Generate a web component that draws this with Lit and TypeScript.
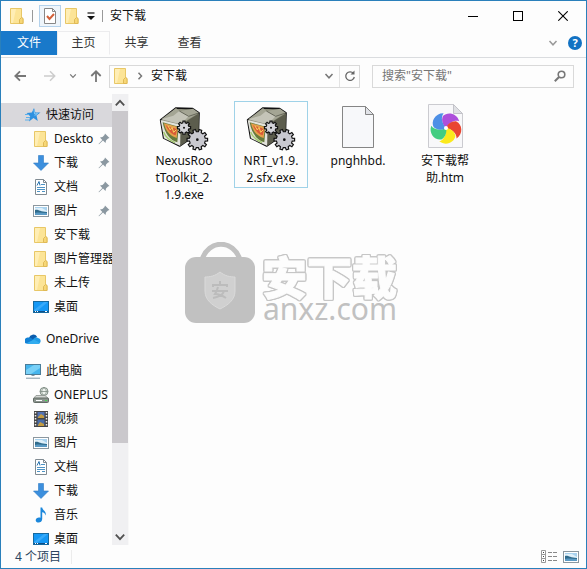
import { LitElement, html, css, svg, nothing } from "lit";
import { customElement, property } from "lit/decorators.js";
import { classMap } from "lit/directives/class-map.js";

const gear = (cx: number, cy: number, outer: number, inner: number, teeth: number) => {
  const pts: string[] = [];
  const step = (Math.PI * 2) / teeth;
  for (let i = 0; i < teeth; i++) {
    const a = i * step;
    for (const [r, o] of [[inner, -0.3], [outer, -0.2], [outer, 0.2], [inner, 0.3]]) {
      pts.push(`${(cx + r * Math.cos(a + o * step)).toFixed(1)} ${(cy + r * Math.sin(a + o * step)).toFixed(1)}`);
    }
  }
  return `M${pts.join("L")}Z`;
};

const petal = "M0 0C-9-7-15-22-9-35C4-49 32-44 39-20C26-25 10-17 0 0Z";

const picture = svg`<rect x=".5" y="2.5" width="15" height="11" fill="#fff" stroke="#8b979f"/>
  <rect x="2" y="4" width="12" height="8" fill="#a9d2ee"/><path d="M2 5h7l5 3v1H2z" fill="#dff0fa"/>
  <path d="M2 7c3-1 5 2 12 2v3H2z" fill="#2f6b8c"/><path d="M2 10c4-1 8 0 12 0v2H2z" fill="#5b9ac4"/>`;

const icons: Record<string, { box: string; art: unknown }> = {
  folder: { box: "0 0 16 16", art: svg`<path d="M1.500.5h11v9l1.500 1v5h-12.500z" fill="#fce496" stroke="#e8c766"/><path d="M10.500 15.500v-4l2-2 1.500 1v5z" fill="#f7d776" stroke="#dfb957"/><path d="M2 1h5L4 15H2z" fill="#ffeeb5"/>` },
  star: { box: "0 0 16 16", art: svg`<path d="M9 1l1.400 4.400 5.100.1-4 3 1.300 5.500L8.500 11 4 14.500l1.200-5.200L1.500 6l5.300-.4z" fill="#2d91e0"/><path d="M0 7.500h4M1 10.500h4M0 13h4" stroke="#5dafe9"/><path d="M9 3l.6 4 3-.5-3 2" stroke="#83c8f5" fill="none"/>` },
  down: { box: "0 0 16 16", art: svg`<path d="M5.500.5h5v7.500h5L8 15.500.5 8h5z" fill="#3c8fdd" stroke="#2d7ac4" stroke-width=".6"/>` },
  doc: { box: "0 0 16 16", art: svg`<path d="M2.500.5h8l3 3v12h-11z" fill="#fff" stroke="#808b92"/><path d="M10.500.5v3h3" fill="none" stroke="#808b92"/><path d="M8 5.500h4M4 8.500h8M4 10.500h8M4 12.500h3M9 12.500h3" stroke="#4e93c4"/><path d="M4 6.500l2-4 1 4" stroke="#2872ae" fill="none"/>` },
  picture: { box: "0 0 16 16", art: picture },
  desktop: { box: "0 0 16 16", art: svg`<rect x=".5" y="2.500" width="15" height="11" fill="#1698f5" stroke="#16699f"/><path d="M1 11L11 3h4L4 12H1z" fill="#37aafa"/><path d="M1 12.500h14" stroke="#0c4e88"/><path d="M2 12.500h1M4 12.500h1M12 12.500h2" stroke="#fff"/>` },
  cloud: { box: "0 0 16 16", art: svg`<path d="M4 7a4.500 4.500 0 0 1 8-1.500L8 10z" fill="#0a5cad"/><path d="M1 12.500A3.300 3.300 0 0 1 3.500 6.500C6 6 8 8 13 12.800H3z" fill="#1181d5"/><path d="M8 9c1-3 3.500-3.500 5-2 3.500.5 3.500 5.500 0 6H3.500z" fill="#209be6"/><path d="M2 12l7-3.500 6 3.500-1.500 1H3.500z" fill="#31acef"/>` },
  pc: { box: "0 0 16 16", art: svg`<rect x=".5" y="1.500" width="15" height="10" fill="#45b5ed" stroke="#4b7d99"/><path d="M1 11V7l8-5h6v3L6 11z" fill="#78d0f7"/><path d="M6.500 12.500h3M1 15.200h14" stroke="#8097a5"/>` },
  drive: { box: "0 0 16 16", art: svg`<circle cx="11" cy="4.500" r="4" fill="#eef3ee" stroke="#7c8a81"/><path d="M7 4.500h8M11 .5c-3 2-3 6 0 8c3-2 3-6 0-8" stroke="#7c8a81" stroke-width=".8" fill="none"/><path d="M3 8.500h9l3.500 3H.5z" fill="#d3d7d3" stroke="#8a918c" stroke-width=".8"/><rect x=".5" y="11" width="15" height="4.500" rx="1" fill="#8a938d" stroke="#626b65"/><path d="M3 13.500h6" stroke="#fff"/><path d="M12 13.500h2" stroke="#47d756"/>` },
  video: { box: "0 0 16 16", art: svg`<rect x="1" y="0" width="14" height="16" fill="#454545"/><path d="M2.500 1v15M13.500 1v15" stroke="#eee" stroke-width="1.500" stroke-dasharray="1.500 1.500"/><rect x="4.500" y="1" width="7" height="6" fill="#5372b3"/><rect x="4.500" y="8.500" width="7" height="6.500" fill="#496da9"/><path d="M5 6l3-3 3 2v2H5zM5 14l2-3 4 2v2H5z" fill="#c49c40"/>` },
  note: { box: "0 0 16 16", art: svg`<path d="M7.500.5h1.700c.3 3 4.500 3.500 3.500 8-.5-2-1.700-3-3.500-3.300V12c0 4.500-6.700 4.500-6.500 1 .2-2 2.600-3 4.800-2.200z" fill="#1b87db"/>` },
  pin: { box: "0 0 12 12", art: svg`<path d="M7 .5l4.500 4.500-1.500.6-2 2L7.500 10 5 7.500 1 11.200.5 11 4.300 7 2 4.500 4.500 4l2-2z" fill="#8b98a1"/>` },
  check: { box: "0 0 16 18", art: svg`<path d="M2.500 1.500h8l3 3v12h-11z" fill="#fff" stroke="#888"/><path d="M10.500 1.500v3h3" fill="none" stroke="#888"/><path d="M5 9l2.500 3L12 7" fill="none" stroke="#d2603a" stroke-width="2"/>` },
  more: { box: "0 0 10 8", art: svg`<path d="M1.500 1h7" stroke="#111" stroke-width="1.200"/><path d="M1 4h8L5 8z" fill="#111"/>` },
  min: { box: "0 0 10 10", art: svg`<path d="M0 5.500h10" stroke="#000"/>` },
  max: { box: "0 0 10 10", art: svg`<rect x=".5" y=".5" width="9" height="9" fill="none" stroke="#000"/>` },
  close: { box: "0 0 10 10", art: svg`<path d="M.3.3l9.400 9.400M9.700.3L.3 9.700" stroke="#000" stroke-width="1.100"/>` },
  chevron: { box: "0 0 10 10", art: svg`<path d="M1.500 3L5 6.800 8.500 3" fill="none" stroke="currentColor" stroke-width="1.500"/>` },
  right: { box: "0 0 10 10", art: svg`<path d="M3.500 1.800L6.500 5 3.500 8.200" fill="none" stroke="currentColor" stroke-width="1.500"/>` },
  back: { box: "0 0 12 12", art: svg`<path d="M12 6H1.500M6 1.300L1.300 6 6 10.700" fill="none" stroke="currentColor" stroke-width="1.800"/>` },
  forward: { box: "0 0 12 12", art: svg`<path d="M0 6h10.500M6 1.300L10.700 6 6 10.700" fill="none" stroke="currentColor" stroke-width="1.500"/>` },
  up: { box: "0 0 12 12", art: svg`<path d="M6 12V1.500M1.300 6L6 1.300 10.700 6" fill="none" stroke="currentColor" stroke-width="1.800"/>` },
  refresh: { box: "0 0 12 12", art: svg`<path d="M9.500 3.500A4.300 4.300 0 1 0 10.300 7" fill="none" stroke="#666" stroke-width="1.300"/><path d="M10.500.5v4h-4z" fill="#666"/>` },
  search: { box: "0 0 12 12", art: svg`<circle cx="7.500" cy="4.500" r="3.300" fill="none" stroke="#777" stroke-width="1.600"/><path d="M5 7L.8 11.200" stroke="#777" stroke-width="2"/>` },
  details: { box: "0 0 16 14", art: svg`<path d="M.5.5h4v12h-4zM.5 4.500h4M.5 8.500h4" fill="#fff" stroke="#999"/><path d="M2 2.500h1M2 6.500h1M2 10.500h1" stroke="#444"/><path d="M7 2.500h4M12 2.500h4M7 6.500h4M12 6.500h4M7 10.500h4M12 10.500h4" stroke="#888"/>` },
  thumbs: { box: "0 0 16 16", art: picture },
  exe: {
    box: "54 24 156 144",
    art: svg`<path d="M62 75L108 39l50 2 19 13-2 60-56 39-48-24z" fill="#8d8e7c" stroke="#111" stroke-width="5" stroke-linejoin="round"/>
      <path d="M62 75l60 14-1 64-49-23z" fill="#e3e3dc"/><path d="M122 89l55-34-1 58-55 40z" fill="#5c5d4d"/>
      <path d="M64 73l44-34 10 9 41-7 17 12-54 34z" fill="#a4a594"/><path d="M64 73l36-11 18-14 28 16-24 24z" fill="#c4c4b8"/>
      <path d="M118 48l28 16 30-10" fill="none" stroke="#66675a" stroke-width="3"/>
      <path d="M68 82l48 13-4 47c-22-5-38-27-44-60z" fill="#667a3c"/><path d="M72 85l42 11-4 33c-20-6-33-20-38-44z" fill="#e5a04b"/>
      <path d="M77 89c8 10 20 4 34 15l-4 17c-15-5-24-16-30-32z" fill="#d95b38"/><path d="M84 93l7 12 5-8 5 15 8-8" fill="none" stroke="#f8d35c" stroke-width="3"/>
      <path d="M71 111c5 14 18 25 34 32" fill="none" stroke="#a2ca6b" stroke-width="4"/>
      <path d=${gear(132, 98, 20, 15, 8)} fill="#d4d4da" stroke="#111" stroke-width="3.500"/><circle cx="132" cy="98" r="3" fill="#111"/>
      <path d=${gear(172, 134, 31, 24, 10)} fill="#c9c9d0" stroke="#111" stroke-width="3.500"/><circle cx="172" cy="134" r="4" fill="#111"/>`,
  },
  blank: { box: "0 0 52 48", art: svg`<path d="M10.500 3.500h23l8 8v33h-31z" fill="#f7f8fa" stroke="#858585"/><path d="M33.500 3.500v8h8z" fill="#e1e3e8" stroke="#858585"/>` },
  htm: {
    box: "0 0 52 48",
    art: svg`<path d="M9.500 1.500h25l9 9v34h-34z" fill="#f8f8fa" stroke="#cbcbd0"/><path d="M34.500 1.500v9h9z" fill="#dfe0e4" stroke="#c3c3c9"/>
      <g transform="translate(27 25) scale(.34)">${[["#ad4fdb", 0], ["#e94632", 72], ["#fbe91c", 144], ["#42cd81", 216], ["#4d8fe6", 288]].map(
        ([c, a]) => svg`<path d=${petal} fill=${c} transform="rotate(${a})"/>`)}<circle r="6" fill="#fff"/></g>`,
  },
};

@customElement("ui-icon")
class UiIcon extends LitElement {
  @property() name = "";
  static styles = css`
    :host { display: block; flex: none; width: 16px; height: 16px; }
    svg { display: block; width: 100%; height: 100%; }
  `;
  render() {
    const i = icons[this.name];
    return i ? html`<svg viewBox=${i.box} aria-hidden="true">${i.art}</svg>` : nothing;
  }
}

type Node = { icon: string; text: string; pinned?: boolean };
const tree: { root: Node; active?: boolean; items: Node[] }[] = [
  {
    root: { icon: "star", text: "快速访问" },
    active: true,
    items: [
      { icon: "folder", text: "Deskto", pinned: true },
      { icon: "down", text: "下载", pinned: true },
      { icon: "doc", text: "文档", pinned: true },
      { icon: "picture", text: "图片", pinned: true },
      { icon: "folder", text: "安下载" },
      { icon: "folder", text: "图片管理器" },
      { icon: "folder", text: "未上传" },
      { icon: "desktop", text: "桌面" },
    ],
  },
  { root: { icon: "cloud", text: "OneDrive" }, items: [] },
  {
    root: { icon: "pc", text: "此电脑" },
    items: [
      { icon: "drive", text: "ONEPLUS" },
      { icon: "video", text: "视频" },
      { icon: "picture", text: "图片" },
      { icon: "doc", text: "文档" },
      { icon: "down", text: "下载" },
      { icon: "note", text: "音乐" },
      { icon: "desktop", text: "桌面" },
    ],
  },
];

const files = [
  { icon: "exe", lines: ["NexusRoo", "tToolkit_2.", "1.9.exe"] },
  { icon: "exe", lines: ["NRT_v1.9.", "2.sfx.exe"], selected: true },
  { icon: "blank", lines: ["pnghhbd."] },
  { icon: "htm", lines: ["安下载帮", "助.htm"] },
];

@customElement("app-root")
class AppRoot extends LitElement {
  static styles = css`
    :host {
      display: block;
      font: 12px/16px "Noto Sans", "Noto Sans CJK SC", sans-serif;
      color: #111;
    }
    * { box-sizing: border-box; }
    button, input { font: inherit; color: inherit; border: 0; padding: 0; margin: 0; background: none; }
    button { display: flex; align-items: center; justify-content: center; }
    .window {
      display: flex; flex-direction: column; height: 100vh;
      border: 1px solid #2a80bb; background: #fdfdfd;
    }
    .title { display: flex; align-items: center; height: 30px; padding: 0 1px 0 5px; }
    .sep { width: 1px; height: 12px; background: #999; }
    .quick { width: 22px; height: 22px; }
    .quick.first { margin-right: 4px; }
    .quick.checked { margin-left: 6px; border: 1px solid #b4d2ec; background: #eef5fb; }
    .quick.checked ui-icon { height: 18px; }
    .quick.more { width: 14px; margin: 0 4px 0 1px; }
    .more ui-icon { width: 10px; height: 8px; }
    h1 { flex: 1; margin: 0 0 0 7px; font-size: 12px; font-weight: 400; }
    .win { width: 45px; height: 28px; }
    .win ui-icon { width: 10px; height: 10px; }
    .ribbon { display: flex; align-items: center; height: 27px; padding-bottom: 2px; border-bottom: 1px solid #dadcdf; }
    .tab { width: 53px; height: 24px; color: #333; border: 1px solid transparent; }
    .tab.file { width: 56px; background: #1979ca; color: #fff; }
    .tab.current { border-color: #ececee; border-bottom-color: transparent; }
    .grow { flex: 1; }
    .fold { color: #999; width: 30px; height: 24px; }
    .fold ui-icon, .crumb ui-icon, .small ui-icon { width: 10px; height: 10px; }
    .help { width: 14px; height: 14px; margin-right: 4px; border-radius: 50%; background: #1272c3; color: #fff; font-weight: 700; font-size: 11px; line-height: 14px; }
    .nav { display: flex; align-items: center; height: 36px; padding: 0 12px 0 6px; color: #777; }
    .arrow { width: 26px; height: 24px; }
    .arrow.forward { color: #ccc; margin-left: 4px; }
    .arrow.small { width: 20px; }
    .arrow ui-icon { width: 12px; height: 12px; }
    .arrow.small ui-icon { width: 8px; height: 8px; }
    .address, .search { display: flex; align-items: center; height: 23px; border: 1px solid #d9d9d9; min-width: 0; }
    .address { flex: 1; margin-right: 12px; padding-left: 3px; }
    .search { flex: 0 1 202px; padding: 0 7px 0 9px; }
    .crumb { width: 22px; height: 21px; }
    .place { color: #111; }
    .drop { width: 20px; height: 21px; }
    .reload { width: 20px; height: 21px; border-left: 1px solid #e3e3e3; }
    .reload ui-icon, .search ui-icon { width: 12px; height: 12px; }
    .search input { flex: 1; min-width: 0; outline: 0; }
    .search input::placeholder { color: #757575; opacity: 1; }
    .body { display: flex; flex: 1; min-height: 0; }
    .side { width: 111px; overflow: hidden; padding-top: 9px; }
    .group { margin-bottom: 8px; }
    .node { width: 100%; height: 24px; justify-content: flex-start; padding-left: 24px; gap: 5px; white-space: nowrap; }
    .node.child { padding-left: 32px; }
    .node.active { background: #d9d8dc; }
    .node span { flex: 1; text-align: left; }
    .node .pin { width: 12px; height: 12px; margin-right: 2px; }
    .scroll { display: flex; flex-direction: column; width: 17px; background: #f0f0f2; color: #505050; border-right: 1px solid #f8f8f8; }
    .step { height: 17px; width: 16px; }
    .step ui-icon { width: 12px; height: 12px; }
    .step.top ui-icon { rotate: 180deg; }
    .thumb { flex: 332; background: #cac8cc; }
    .rest { flex: 85; }
    .content { position: relative; flex: 1; min-width: 0; padding: 7px 0 0 18px; }
    .files { display: flex; flex-wrap: wrap; align-items: flex-start; gap: 13px; }
    .item { width: 74px; flex-direction: column; border: 1px solid transparent; padding-bottom: 1px; line-height: 17px; }
    .item.selected { border-color: #9fd2e8; }
    .item ui-icon { width: 52px; height: 48px; margin: 1px 0; }
    .item span { display: block; white-space: nowrap; }
    .mark { position: absolute; left: 55px; top: 148px; display: flex; gap: 4px; color: #c1c1c1; }
    .bag { width: 72px; height: 82px; }
    .words { display: flex; flex-direction: column; padding-top: 14px; }
    .cn {
      display: block; width: 140px; height: 44px; overflow: visible;
      font: 900 45px/44px "Noto Sans CJK SC", sans-serif;
      filter: drop-shadow(1px 0 0 #c6c6c6) drop-shadow(-1px 0 0 #c6c6c6) drop-shadow(0 1px 0 #c6c6c6) drop-shadow(0 -1px 0 #c6c6c6);
    }
    .cn text { fill: #fdfdfd; stroke: #fdfdfd; stroke-width: 1px; stroke-linejoin: round; }
    .en { font-size: 30px; line-height: 24px; padding-left: 3px; margin-top: -3px; }
    .status { display: flex; align-items: center; height: 23px; padding: 0 7px 0 14px; color: #2c4560; gap: 6px; }
    .status .line { width: 1px; height: 14px; background: #ececec; margin-left: 4px; }
    .status .view { width: 16px; height: 16px; }
    .status .view.list ui-icon { height: 14px; }
  `;

  row(n: Node, child: boolean, active = false) {
    return html`<button class=${classMap({ node: true, child, active })}>
      <ui-icon name=${n.icon}></ui-icon><span>${n.text}</span>
      ${n.pinned ? html`<ui-icon class="pin" name="pin"></ui-icon>` : nothing}
    </button>`;
  }

  render() {
    return html`<div class="window">
      <header class="title">
        <button class="quick first" aria-label="文件夹"><ui-icon name="folder"></ui-icon></button>
        <i class="sep"></i>
        <button class="quick checked" aria-label="属性"><ui-icon name="check"></ui-icon></button>
        <button class="quick" aria-label="新建文件夹"><ui-icon name="folder"></ui-icon></button>
        <button class="quick more" aria-label="自定义"><ui-icon name="more"></ui-icon></button>
        <i class="sep"></i>
        <h1>安下载</h1>
        <button class="win" aria-label="最小化"><ui-icon name="min"></ui-icon></button>
        <button class="win" aria-label="最大化"><ui-icon name="max"></ui-icon></button>
        <button class="win" aria-label="关闭"><ui-icon name="close"></ui-icon></button>
      </header>
      <nav class="ribbon">
        <button class="tab file">文件</button>
        <button class="tab current">主页</button>
        <button class="tab">共享</button>
        <button class="tab">查看</button>
        <span class="grow"></span>
        <button class="fold" aria-label="展开功能区"><ui-icon name="chevron"></ui-icon></button>
        <button class="help" aria-label="帮助">?</button>
      </nav>
      <div class="nav">
        <button class="arrow" aria-label="后退"><ui-icon name="back"></ui-icon></button>
        <button class="arrow forward" aria-label="前进"><ui-icon name="forward"></ui-icon></button>
        <button class="arrow small" aria-label="最近位置"><ui-icon name="chevron"></ui-icon></button>
        <button class="arrow" aria-label="向上"><ui-icon name="up"></ui-icon></button>
        <div class="address">
          <ui-icon name="folder"></ui-icon>
          <button class="crumb" aria-label="展开"><ui-icon name="right"></ui-icon></button>
          <button class="place">安下载</button>
          <span class="grow"></span>
          <button class="drop small" aria-label="历史"><ui-icon name="chevron"></ui-icon></button>
          <button class="reload" aria-label="刷新"><ui-icon name="refresh"></ui-icon></button>
        </div>
        <label class="search">
          <input type="text" aria-label="搜索" placeholder='搜索"安下载"' />
          <ui-icon name="search"></ui-icon>
        </label>
      </div>
      <div class="body">
        <nav class="side">
          ${tree.map((g) => html`<div class="group">
            ${this.row(g.root, false, g.active)}${g.items.map((n) => this.row(n, true))}
          </div>`)}
        </nav>
        <div class="scroll">
          <button class="step top" aria-label="向上滚动"><ui-icon name="chevron"></ui-icon></button>
          <div class="thumb"></div>
          <div class="rest"></div>
          <button class="step" aria-label="向下滚动"><ui-icon name="chevron"></ui-icon></button>
        </div>
        <main class="content">
          <div class="files">
            ${files.map((f) => html`<button class=${classMap({ item: true, selected: !!f.selected })}>
              <ui-icon name=${f.icon}></ui-icon>${f.lines.map((l) => html`<span>${l}</span>`)}
            </button>`)}
          </div>
          <div class="mark">
            <svg class="bag" viewBox="0 0 72 82" aria-hidden="true">
              <path d="M18 18C24-3 50-3 56 18" fill="none" stroke="#c1c1c1" stroke-width="5"/>
              <rect x="1" y="15" width="70" height="66" rx="11" fill="#c1c1c1"/>
              <path d="M36 30c5 4 10 5 15 5v14c0 9-7 14-15 18-8-4-15-9-15-18V35c5 0 10-1 15-5z" fill="#d0d0d0" stroke="#dadada"/>
              <path d="M36 39v3M29 45v-2h14v2M28 49h16M34 45c-1 4-3 7-3 7 4 0 8 2 11 4M40 49c-1 4-5 6-11 7" fill="none" stroke="#bcbcbc" stroke-width="2"/>
            </svg>
            <div class="words">
              <svg class="cn"><text x="2" y="39">安下载</text></svg>
              <span class="en">anxz.com</span>
            </div>
          </div>
        </main>
      </div>
      <footer class="status">
        <span>4 个项目</span><i class="line"></i><span class="grow"></span>
        <button class="view list" aria-label="详细信息"><ui-icon name="details"></ui-icon></button>
        <button class="view" aria-label="大图标"><ui-icon name="thumbs"></ui-icon></button>
      </footer>
    </div>`;
  }
}
